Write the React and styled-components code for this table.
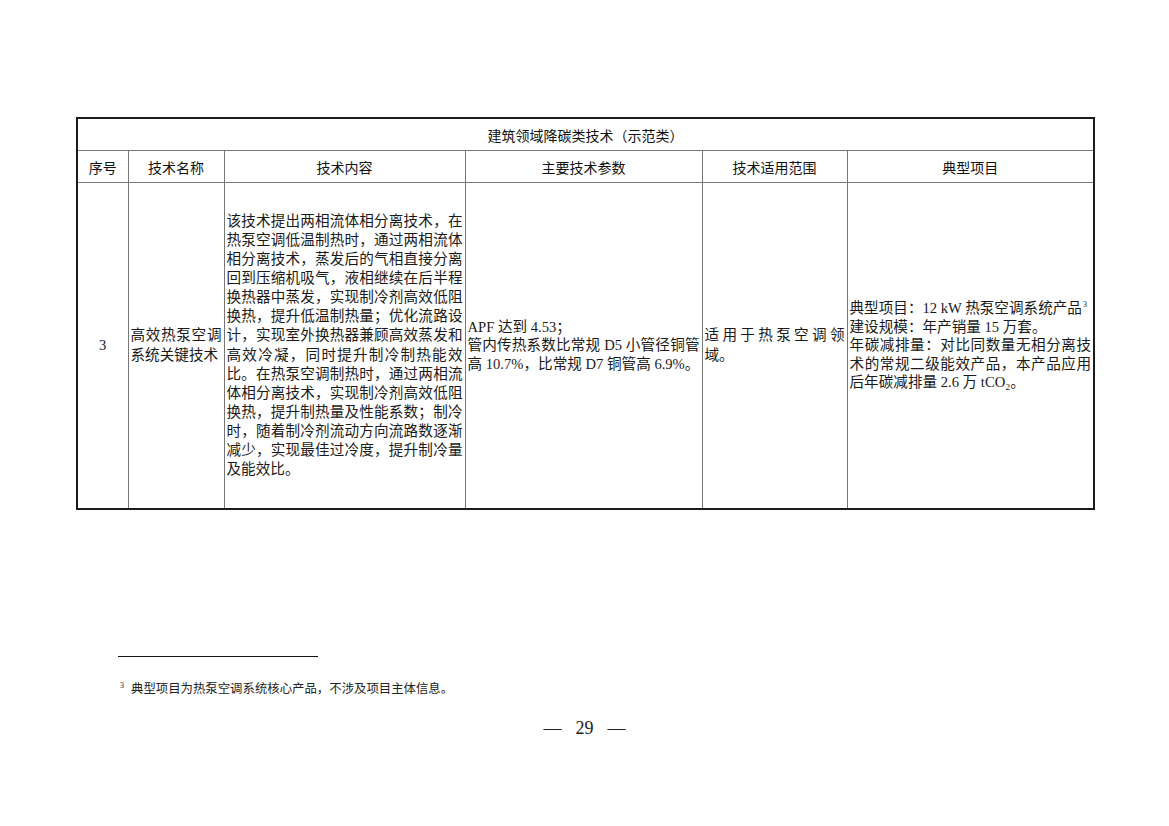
import React from 'react';
import styled, { createGlobalStyle } from 'styled-components';

const GlobalStyle = createGlobalStyle`
  html, body {
    margin: 0;
    padding: 0;
    background: #fff;
  }
  body {
    font-family: 'Liberation Serif', 'Noto Sans CJK SC', serif;
    color: #1a1a1a;
  }
`;

const StyledPage = styled.div`
  width: 1169px;
  min-height: 826px;
  padding: 117px 0 0 76px;
  box-sizing: border-box;
`;

const StyledTable = styled.table`
  width: 1017px;
  border-collapse: collapse;
  table-layout: fixed;
  border: 2px solid #1c1c1c;
`;

const StyledHeadCell = styled.th`
  border: 1px solid #777;
  height: ${({ tall }) => (tall ? '31px' : '31px')};
  padding: 0;
  font-family: 'Noto Sans CJK SC', 'Liberation Sans', sans-serif;
  font-weight: 400;
  font-size: 14px;
  text-align: center;
  vertical-align: middle;
  color: #111;
`;

const StyledCell = styled.td`
  border: 1px solid #777;
  height: 325px;
  padding: 0 2px;
  font-size: 14.6px;
  line-height: ${({ dense }) => (dense ? '18.6px' : '19.1px')};
  vertical-align: middle;
  text-align: ${({ center }) => (center ? 'center' : 'justify')};
  line-break: strict;
`;

const StyledPara = styled.div`
  text-align: justify;
`;

const StyledSup = styled.sup`
  font-size: 8px;
  line-height: 0;
  vertical-align: 6px;
  margin-left: 1px;
`;

const StyledFootnotes = styled.div`
  margin: 146px 0 0 42px;
`;

const StyledRule = styled.div`
  width: 200px;
  height: 1px;
  background: #111;
`;

const StyledNote = styled.div`
  display: flex;
  align-items: flex-start;
  gap: 7px;
  margin-top: 24px;
  font-size: 12.4px;
  line-height: 16px;
  color: #222;
`;

const StyledNoteMark = styled.span`
  font-size: 8px;
  line-height: 10px;
  padding-left: 2px;
`;

const StyledPageNumber = styled.div`
  display: flex;
  justify-content: center;
  gap: 14px;
  margin: 19px 0 0 -76px;
  font-size: 18px;
  line-height: 24px;
  color: #222;
`;

const columns = [51, 96, 241, 237, 145, 247];
const headers = ['序号', '技术名称', '技术内容', '主要技术参数', '技术适用范围', '典型项目'];

const App = () => (
  <>
    <GlobalStyle />
    <StyledPage>
      <StyledTable>
        <colgroup>
          {columns.map((w, i) => (
            <col key={i} style={{ width: w }} />
          ))}
        </colgroup>
        <thead>
          <tr>
            <StyledHeadCell colSpan={6} tall>
              建筑领域降碳类技术（示范类）
            </StyledHeadCell>
          </tr>
          <tr>
            {headers.map((h) => (
              <StyledHeadCell key={h}>{h}</StyledHeadCell>
            ))}
          </tr>
        </thead>
        <tbody>
          <tr>
            <StyledCell center>3</StyledCell>
            <StyledCell>高效热泵空调系统关键技术</StyledCell>
            <StyledCell>
              该技术提出两相流体相分离技术，在热泵空调低温制热时，通过两相流体相分离技术，蒸发后的气相直接分离回到压缩机吸气，液相继续在后半程换热器中蒸发，实现制冷剂高效低阻换热，提升低温制热量；优化流路设计，实现室外换热器兼顾高效蒸发和高效冷凝，同时提升制冷制热能效比。在热泵空调制热时，通过两相流体相分离技术，实现制冷剂高效低阻换热，提升制热量及性能系数；制冷时，随着制冷剂流动方向流路数逐渐减少，实现最佳过冷度，提升制冷量及能效比。
            </StyledCell>
            <StyledCell dense>
              <StyledPara>APF 达到 4.53；</StyledPara>
              <StyledPara>管内传热系数比常规 D5 小管径铜管高 10.7%，比常规 D7 铜管高 6.9%。</StyledPara>
            </StyledCell>
            <StyledCell>适用于热泵空调领域。</StyledCell>
            <StyledCell dense>
              <StyledPara>
                典型项目：12 kW 热泵空调系统产品<StyledSup>3</StyledSup>
              </StyledPara>
              <StyledPara>建设规模：年产销量 15 万套。</StyledPara>
              <StyledPara>
                年碳减排量：对比同数量无相分离技术的常规二级能效产品，本产品应用后年碳减排量 2.6 万 tCO₂。
              </StyledPara>
            </StyledCell>
          </tr>
        </tbody>
      </StyledTable>

      <StyledFootnotes>
        <StyledRule />
        <StyledNote>
          <StyledNoteMark>3</StyledNoteMark>
          <span>典型项目为热泵空调系统核心产品，不涉及项目主体信息。</span>
        </StyledNote>
      </StyledFootnotes>

      <StyledPageNumber>
        <span>—</span>
        <span>29</span>
        <span>—</span>
      </StyledPageNumber>
    </StyledPage>
  </>
);

export default App;
